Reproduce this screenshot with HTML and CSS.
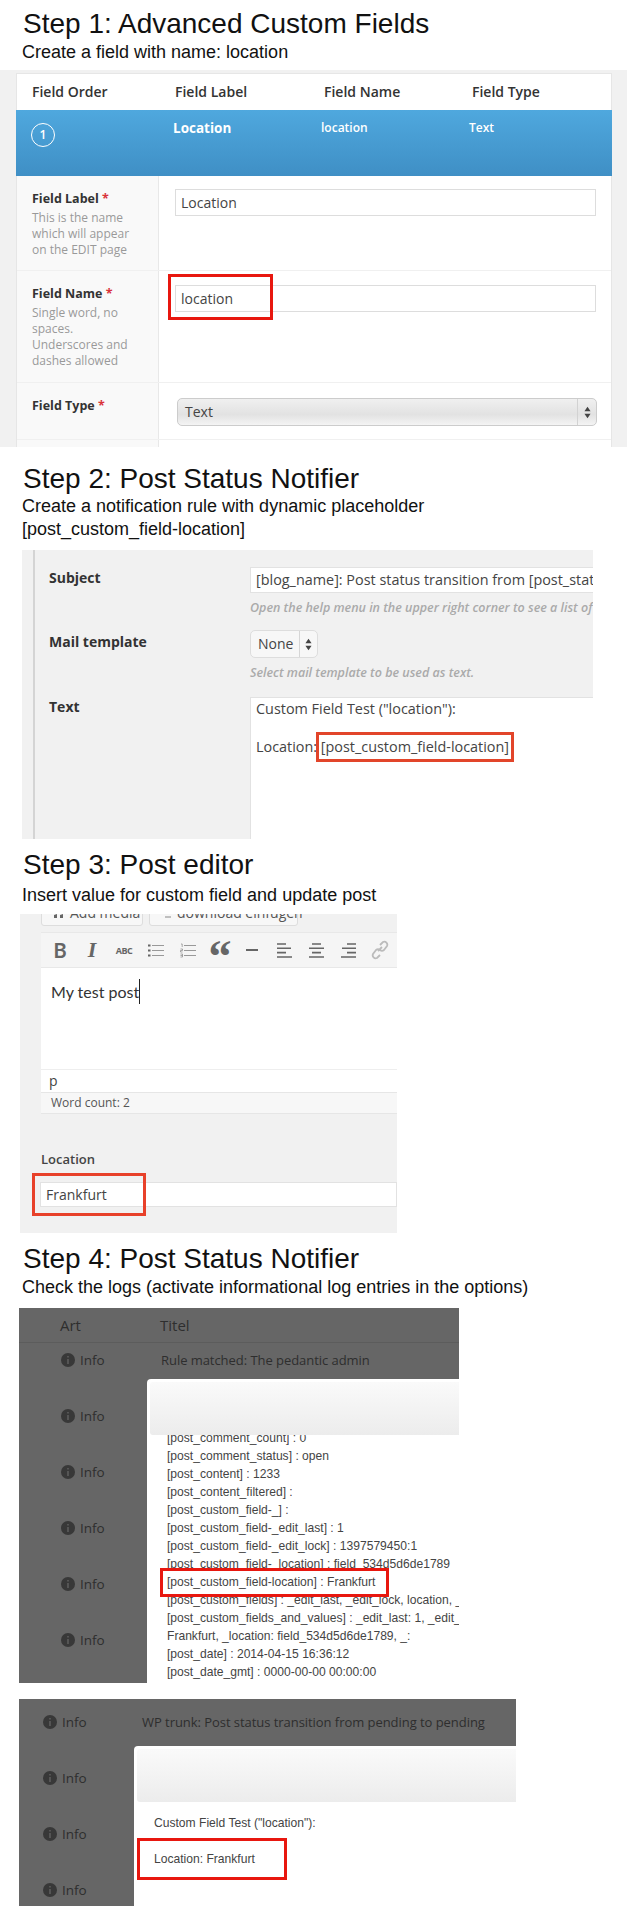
FILE: index.html
```html
<!DOCTYPE html>
<html lang="en">
<head>
<meta charset="utf-8">
<title>Custom field steps</title>
<link rel="stylesheet" href="styles.css">
</head>
<body>
<svg class="defs" width="0" height="0" aria-hidden="true">
  <symbol id="info" viewBox="0 0 14 14"><circle cx="7" cy="7" r="7" fill="#383838"/><path d="M7 6v5M7 3v1.6" stroke="#5c5c5c" stroke-width="1.6" fill="none"/></symbol>
  <symbol id="updown" viewBox="0 0 8 14"><path d="M4 0.5 7.5 5.5H0.5ZM4 13.5 0.5 8.5H7.5Z" fill="#444"/></symbol>
</svg>

<h2 class="title t1">Step 1: Advanced Custom Fields</h2>
<p class="sub s1">Create a field with name: location</p>
<section class="shot acf">
  <div class="panel">
    <div class="cols head"><span>Field Order</span><span>Field Label</span><span>Field Name</span><span>Field Type</span></div>
    <div class="cols blue">
      <span class="num"><b>1</b></span>
      <span class="blue-label">Location</span><span class="blue-name">location</span><span class="blue-type">Text</span>
    </div>
    <div class="row r1">
      <div class="side"><div class="lbl">Field Label <i>*</i></div><div class="desc">This is the name which will appear on the EDIT page</div></div>
      <div class="main"><div class="box">Location</div></div>
    </div>
    <div class="row r2">
      <div class="side"><div class="lbl">Field Name <i>*</i></div><div class="desc">Single word, no spaces. Underscores and dashes allowed</div></div>
      <div class="main"><div class="box">location</div><div class="red red-acf"></div></div>
    </div>
    <div class="row r3">
      <div class="side"><div class="lbl">Field Type <i>*</i></div></div>
      <div class="main"><div class="drop"><span>Text</span><span class="drop-arrow"><svg width="7" height="13"><use href="#updown"/></svg></span></div></div>
    </div>
    <div class="row r4"><div class="side"></div><div class="main"></div></div>
  </div>
</section>

<h2 class="title t2">Step 2: Post Status Notifier</h2>
<p class="sub s2">Create a notification rule with dynamic placeholder<br>[post_custom_field-location]</p>
<section class="shot psn">
  <div class="psn-inner">
    <div class="psn-row pr1">
      <div class="psn-lbl">Subject</div>
      <div class="psn-field"><div class="psn-input">[blog_name]: Post status transition from [post_status_before] to [post_status_after]</div><div class="help">Open the help menu in the upper right corner to see a list of all placeholders</div></div>
    </div>
    <div class="psn-row pr2">
      <div class="psn-lbl lbl2">Mail template</div>
      <div class="psn-field"><div class="psn-select"><span>None</span><span class="psn-arrow"><svg width="7" height="13"><use href="#updown"/></svg></span></div><div class="help help2">Select mail template to be used as text.</div></div>
    </div>
    <div class="psn-row pr3">
      <div class="psn-lbl">Text</div>
      <div class="psn-field"><div class="psn-area">Custom Field Test ("location"):<br><br>Location: [post_custom_field-location]<div class="red red-psn"></div></div></div>
    </div>
  </div>
</section>

<h2 class="title t3">Step 3: Post editor</h2>
<p class="sub s3">Insert value for custom field and update post</p>
<section class="shot editor">
  <div class="media-row">
    <span class="media m1"><svg class="media-icon" width="10" height="6" viewBox="0 0 10 6"><path d="M0 6V3L3 2V6ZM6 6V3L9 2V6Z" fill="#666"/></svg>Add media</span>
    <span class="media m2"><svg class="media-icon" width="6" height="6" viewBox="0 0 6 6"><path d="M0 5h6" stroke="#888"/></svg>download einfügen</span>
  </div>
  <div class="toolbar">
    <span class="tool t-b">B</span>
    <span class="tool t-i">I</span>
    <span class="tool t-abc">ABC</span>
    <span class="tool"><svg width="16" height="15" viewBox="0 0 16 15"><path d="M4 2.500h12M4 7.500h12M4 12.500h12" stroke="#999" stroke-width="1"/><path d="M0 2.500h2.500M0 7.500h2.500M0 12.500h2.500" stroke="#666" stroke-width="2"/></svg></span>
    <span class="tool"><svg width="16" height="15" viewBox="0 0 16 15"><path d="M4 2.500h12M4 7.500h12M4 12.500h12" stroke="#999" stroke-width="1"/><path d="M1 1h1.200v3M0.500 6h2v1.500h-2v1.500h2M0.500 11h2v3h-2M0.500 12.500h2" stroke="#888" stroke-width="0.700" fill="none"/></svg></span>
    <span class="tool t-q">“</span>
    <span class="tool"><svg width="14" height="14" viewBox="0 0 14 14"><path d="M1 7h12" stroke="#666" stroke-width="2"/></svg></span>
    <span class="tool"><svg width="15" height="15" viewBox="0 0 15 15"><path d="M0 1h9M0 5.300h14M0 9.600h9M0 14h15" stroke="#666" stroke-width="1.600"/></svg></span>
    <span class="tool"><svg width="15" height="15" viewBox="0 0 15 15"><path d="M3 1h9M0 5.300h15M3 9.600h9M0 14h15" stroke="#666" stroke-width="1.600"/></svg></span>
    <span class="tool"><svg width="15" height="15" viewBox="0 0 15 15"><path d="M6 1h9M1 5.300h14M6 9.600h9M0 14h15" stroke="#666" stroke-width="1.600"/></svg></span>
    <span class="tool"><svg width="18" height="20" viewBox="0 0 18 20"><path d="M7 11 11 7M9 5l3-3a3 3 0 0 1 4 4l-3 4a3 3 0 0 1-4 0M9 15l-3 3a3 3 0 0 1-4-4l3-4a3 3 0 0 1 4 0" stroke="#bbb" stroke-width="1.800" fill="none"/></svg></span>
  </div>
  <div class="content"><span class="typed">My test post</span></div>
  <div class="path">p</div>
  <div class="count">Word count: 2</div>
  <div class="loc-label">Location</div>
  <div class="loc-input">Frankfurt<div class="red red-ed"></div></div>
</section>

<h2 class="title t4">Step 4: Post Status Notifier</h2>
<p class="sub s4">Check the logs (activate informational log entries in the options)</p>
<section class="shot log log-a">
  <div class="log-head"><span>Art</span><span>Titel</span></div>
  <div class="log-row"><span class="kind"><svg width="14" height="14"><use href="#info"/></svg>Info</span><span class="log-title">Rule matched: The pedantic admin</span></div>
  <div class="log-row"><span class="kind"><svg width="14" height="14"><use href="#info"/></svg>Info</span></div>
  <div class="log-row"><span class="kind"><svg width="14" height="14"><use href="#info"/></svg>Info</span></div>
  <div class="log-row"><span class="kind"><svg width="14" height="14"><use href="#info"/></svg>Info</span></div>
  <div class="log-row"><span class="kind"><svg width="14" height="14"><use href="#info"/></svg>Info</span></div>
  <div class="log-row"><span class="kind"><svg width="14" height="14"><use href="#info"/></svg>Info</span></div>
  <div class="modal modal-a">
    <div class="modal-head"></div>
    <div class="dump">
      <div>[post_comment_count] : 0</div>
      <div>[post_comment_status] : open</div>
      <div>[post_content] : 1233</div>
      <div>[post_content_filtered] :</div>
      <div>[post_custom_field-_] :</div>
      <div>[post_custom_field-_edit_last] : 1</div>
      <div>[post_custom_field-_edit_lock] : 1397579450:1</div>
      <div>[post_custom_field-_location] : field_534d5d6de1789</div>
      <div class="marked">[post_custom_field-location] : Frankfurt<div class="red red-dump"></div></div>
      <div>[post_custom_fields] : _edit_last, _edit_lock, location, _location, _</div>
      <div>[post_custom_fields_and_values] : _edit_last: 1, _edit_lock: 1397579450:1, location:</div>
      <div>Frankfurt, _location: field_534d5d6de1789, _:</div>
      <div>[post_date] : 2014-04-15 16:36:12</div>
      <div>[post_date_gmt] : 0000-00-00 00:00:00</div>
    </div>
  </div>
</section>

<section class="shot log log-b">
  <div class="log-row"><span class="kind"><svg width="14" height="14"><use href="#info"/></svg>Info</span><span class="log-title">WP trunk: Post status transition from pending to pending</span></div>
  <div class="log-row"><span class="kind"><svg width="14" height="14"><use href="#info"/></svg>Info</span></div>
  <div class="log-row"><span class="kind"><svg width="14" height="14"><use href="#info"/></svg>Info</span></div>
  <div class="log-row"><span class="kind"><svg width="14" height="14"><use href="#info"/></svg>Info</span></div>
  <div class="modal modal-b">
    <div class="modal-head"></div>
    <div class="mail">
      <div class="mail-line">Custom Field Test ("location"):</div>
      <div class="mail-line marked">Location: Frankfurt<div class="red red-mail"></div></div>
    </div>
  </div>
</section>
</body>
</html>
```
FILE: styles.css
```css
* { box-sizing: border-box; }
html, body { margin: 0; padding: 0; background: #fff; }
body { font-family: "Liberation Sans", Arial, sans-serif; color: #111; height: 1926px; overflow: hidden; }
.defs { position: absolute; }

.title { margin: 0 0 0 23px; font-weight: 400; font-size: 28px; line-height: 32px; color: #111; }
.sub { margin: 0 0 0 22px; font-size: 18px; line-height: 23px; color: #111; }
.t1 { margin-top: 8px; }
.s1 { margin-top: 1px; margin-bottom: 6px; }
.t2 { margin-top: 16px; }
.s2 { margin-bottom: 9px; }
.t3 { margin-top: 10px; }
.s3 { margin-top: 3px; margin-bottom: 7px; }
.t4 { margin-top: 10px; }
.s4 { margin-top: 1px; margin-bottom: 9px; }

.shot { position: relative; overflow: hidden; font-family: "Open Sans", sans-serif; }
.red { position: absolute; border: 3px solid #e8170f; pointer-events: none; }

/* Step 1 */
.acf { height: 377px; background: #f1f1f1; padding: 3px 15px 0 16px; }
.panel { background: #fff; border: 1px solid #e6e6e6; border-bottom: 0; height: 374px; }
.cols { display: grid; grid-template-columns: 143px 149px 148px 1fr; }
.head { height: 36px; padding: 9px 0 0 15px; font-size: 14px; line-height: 18px; font-weight: 600; color: #333; }
.blue { height: 66px; margin: 0 -1px; padding: 8px 0 0 15px; background: linear-gradient(#4fa8de, #3f8fc5); color: #fff; position: relative; }
.num { position: absolute; left: 15px; top: 13px; width: 24px; height: 24px; border: 1.5px solid #fff; border-radius: 50%; text-align: center; font-size: 12px; line-height: 21px; }
.num b { font-weight: 600; }
.blue-label { grid-column: 2; margin-left: -1px; font-size: 13.500px; line-height: 20px; font-weight: 700; }
.blue-name { margin-left: -2px; font-size: 12px; line-height: 20px; font-weight: 600; }
.blue-type { margin-left: -2px; font-size: 12px; line-height: 20px; font-weight: 600; }
.row { display: grid; grid-template-columns: 142px 1fr; border-bottom: 1px solid #f0f0f0; }
.r1 { height: 95px; }
.r2 { height: 112px; }
.r3 { height: 57px; }
.r4 { height: 20px; }
.side { background: #f9f9f9; border-right: 1px solid #e8e8e8; padding: 14px 27px 0 15px; }
.main { position: relative; padding: 13px 15px 0 16px; }
.r2 .main { padding-top: 14px; }
.r3 .main { padding: 15px 14px 0 18px; }
.lbl { font-size: 12.500px; line-height: 18px; font-weight: 700; color: #333; white-space: nowrap; }
.lbl i { font-style: normal; color: #d9333a; }
.desc { margin-top: 2px; font-size: 12px; line-height: 16px; color: #999; }
.box { height: 27px; border: 1px solid #ddd; padding-left: 5px; font-size: 14px; line-height: 25px; color: #444; background: #fff; }
.drop { height: 28px; display: flex; justify-content: space-between; border: 1px solid #ccc; border-radius: 5px; background: linear-gradient(#f0f0f0, #e2e2e2 60%, #f4f4f4); font-size: 14px; line-height: 26px; color: #444; padding-left: 7px; }
.drop-arrow { width: 19px; border-left: 1px solid #d2d2d2; display: flex; align-items: center; justify-content: center; }
.red-acf { left: 9px; top: 3px; width: 105px; height: 46px; }

/* Step 2 */
.psn { margin-left: 22px; width: 571px; height: 289px; background: #f1f1f1; }
.psn-inner { margin-left: 11px; height: 289px; border-left: 2px solid #d4d4d4; }
.psn-row { display: grid; grid-template-columns: 215px 400px; }
.psn-lbl { padding: 1px 0 0 14px; font-size: 14px; line-height: 20px; font-weight: 700; color: #333; }
.lbl2 { padding-top: 2px; }
.pr1 { height: 80px; padding-top: 17px; }
.pr2 { height: 67px; }
.pr3 { height: 142px; }
.pr3 .psn-lbl { padding-top: 0; }
.psn-input { height: 26px; width: 400px; background: #fff; border: 1px solid #e2e2e2; padding-left: 5px; font-size: 14.400px; line-height: 24px; color: #444; white-space: nowrap; overflow: hidden; }
.help { margin-top: 7px; font-size: 12.500px; line-height: 16px; font-style: italic; font-weight: 600; color: #aaa; white-space: nowrap; }
.help2 { margin-top: 7px; }
.psn-select { width: 68px; height: 28px; display: flex; border: 1px solid #ddd; border-radius: 5px; background: #f7f7f7; font-size: 14px; line-height: 26px; color: #444; padding-left: 7px; }
.psn-select span:first-child { width: 41px; }
.psn-arrow { flex: 1; border-left: 1px solid #d6d6d6; display: flex; align-items: center; justify-content: center; }
.psn-area { position: relative; height: 142px; width: 400px; background: #fff; border: 1px solid #e2e2e2; border-bottom: 0; padding: 1px 0 0 5px; font-size: 14.400px; line-height: 19px; color: #444; }
.red-psn { left: 65px; top: 34px; width: 198px; height: 30px; border-color: #e2452a; }

/* Step 3 */
.editor { margin-left: 20px; width: 377px; height: 319px; background: #f1f1f1; padding-left: 21px; }
.media-row { display: flex; gap: 6px; height: 12px; align-items: flex-end; }
.media { flex: none; height: 30px; padding-top: 6px; font-size: 14px; line-height: 19px; background: #f7f7f7; border: 1px solid #ddd; border-radius: 3px; color: #555; white-space: nowrap; }
.media-icon { margin-right: 6px; }
.m1 { width: 102px; padding-left: 12px; }
.m2 { width: 149px; padding-left: 15px; }
.toolbar { display: flex; margin-top: 6px; height: 36px; padding-left: 3px; background: #f5f5f5; border: 1px solid #e8e8e8; border-width: 1px 0; align-items: center; }
.tool { flex: none; width: 32px; text-align: center; display: flex; align-items: center; justify-content: center; color: #666; }
.t-b { font-family: "Lato", sans-serif; font-size: 20px; font-weight: 700; }
.t-i { font-family: "Liberation Serif", serif; font-size: 22px; font-weight: 700; font-style: italic; }
.t-abc { font-size: 9px; font-weight: 700; letter-spacing: -0.5px; }
.t-q { font-family: "Liberation Serif", serif; font-size: 46px; font-weight: 700; line-height: 20px; height: 20px; padding-top: 14px; }
.content { height: 101px; background: #fff; padding: 12px 0 0 10px; font-family: "Lato", sans-serif; font-size: 16px; line-height: 24px; color: #333; }
.typed { border-right: 1px solid #222; padding: 3px 0; }
.path { height: 23px; background: #fff; border-top: 1px solid #eee; padding-left: 8px; font-size: 14px; line-height: 22px; color: #444; }
.count { height: 22px; background: #f7f7f7; border: 1px solid #e6e6e6; border-width: 1px 0; padding-left: 10px; font-size: 12px; line-height: 20px; color: #555; }
.loc-label { margin-top: 36px; font-size: 13px; line-height: 18px; font-weight: 600; color: #444; }
.loc-input { position: relative; margin: 14px 0 0 -1px; height: 25px; background: #fff; border: 1px solid #e2e2e2; padding-left: 5px; font-size: 14px; line-height: 23px; color: #444; }
.red-ed { left: -9px; top: -10px; width: 114px; height: 43px; border-color: #e8412a; }

/* Step 4 */
.log { background: #666; color: #2e2e2e; font-size: 13.500px; line-height: 20px; }
.log-a { margin-left: 19px; width: 440px; height: 375px; }
.log-b { margin: 16px 0 0 19px; width: 497px; height: 207px; padding-top: 6px; }
.log-head { height: 35px; padding: 7px 0 0 41px; display: grid; grid-template-columns: 100px 1fr; border-bottom: 1px solid #5c5c5c; font-size: 15px; }
.log-row { height: 56px; padding-top: 7px; display: grid; }
.log-a .log-row { grid-template-columns: 100px 1fr; padding-left: 42px; }
.log-b .log-row { grid-template-columns: 99px 1fr; padding-left: 24px; }
.log-title { font-size: 13px; letter-spacing: -0.05px; white-space: nowrap; }
.kind { display: flex; gap: 5px; align-items: center; height: 20px; }
.modal { position: absolute; right: 0; bottom: 0; background: #fff; border-radius: 4px 0 0 0; color: #444; font-family: "Liberation Sans", Arial, sans-serif; font-size: 12.100px; line-height: 18px; padding-top: 3px; overflow: hidden; }
.modal-a { left: 128px; top: 71px; }
.modal-b { left: 115px; top: 47px; }
.modal-head { position: relative; z-index: 1; margin-left: 3px; height: 53px; background: linear-gradient(#fafafa, #ececec); border-radius: 3px 0 0 3px; }
.dump { margin-top: -6px; padding-left: 20px; white-space: nowrap; }
.marked { position: relative; z-index: 2; }
.red-dump { left: -7px; top: -5px; width: 229px; height: 29px; }
.mail { padding: 12px 0 0 20px; }
.mail-line { margin-bottom: 18px; }
.red-mail { left: -17px; top: -12px; width: 150px; height: 42px; }
```
